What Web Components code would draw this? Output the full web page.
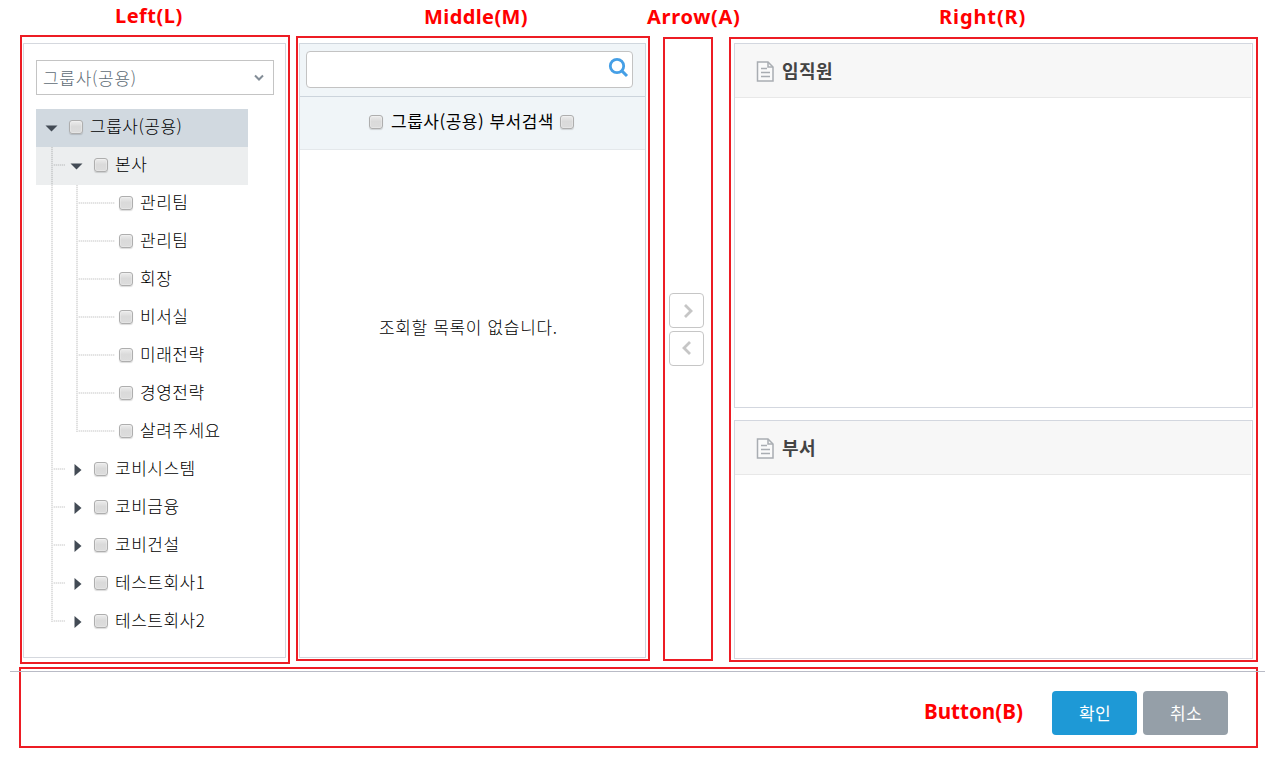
<!DOCTYPE html>
<html lang="ko">
<head>
<meta charset="utf-8">
<title>조직도</title>
<style>
html,body{margin:0;background:#fff;height:758px;overflow:hidden}
body{font-family:"Noto Sans CJK KR",sans-serif;font-size:16px;color:#222}
</style>
</head>
<body>
<org-dialog></org-dialog>
<script>
const define=(name,html,init)=>customElements.define(name,class extends HTMLElement{
  connectedCallback(){
    if(this.shadowRoot)return;
    const t=document.createElement('template');
    t.innerHTML='<style>*{box-sizing:border-box}</style>'+html;
    this.attachShadow({mode:'open'}).append(t.content.cloneNode(true));
    if(init)init.call(this,this.shadowRoot);
  }
});

define('check-box',`<style>
:host{display:block;flex:none;width:14px;height:14px;box-sizing:border-box;border:1px solid #aeaeae;border-radius:3px;background:linear-gradient(#ececec,#dadada 45%,#dcdcdc);box-shadow:0 1px 1px rgba(0,0,0,.14), inset 0 0 0 1px rgba(255,255,255,.25)}
</style>`);

define('area-label',`<style>
:host{display:block;white-space:nowrap;font:700 20px/24px "Noto Sans",sans-serif;color:#f00}
</style><slot></slot>`);

define('area-frame',`<style>
:host{display:flex;flex-direction:column;box-sizing:border-box;border:2px solid #ed1c24}
</style><slot></slot>`);

define('combo-box',`<style>
:host{display:flex;align-items:center;justify-content:space-between;box-sizing:border-box;height:35px;border:1px solid #c4c4c4;padding:0 9px 0 6px;color:#606c76;font-size:17px;font-weight:300;letter-spacing:.7px;line-height:33px;white-space:nowrap}
svg{display:block}
</style><span><slot></slot></span><svg width="10" height="8" viewBox="0 0 10 8"><path d="M1 1.5 5 5.5 9 1.5" fill="none" stroke="#838d97" stroke-width="2"/></svg>`);

define('tree-row',`<style>
:host{display:flex;align-items:stretch;height:38px;width:212px;white-space:nowrap;color:#000;font-size:17px;font-weight:300;letter-spacing:.5px}
:host([tone=sel]){background:#d1d9e0}
:host([tone=sub]){background:#eceeef}
.g{flex:none;width:25px;padding-left:15px}
.v{width:2px;height:38px;background:repeating-linear-gradient(rgba(0,0,0,.12) 0 1px,rgba(0,0,0,.04) 1px 2px)}
.v.half{height:19px}
.h{flex:none;align-self:flex-start;height:2px;margin-top:17px;background:repeating-linear-gradient(90deg,rgba(0,0,0,.04) 0 1px,rgba(0,0,0,.11) 1px 2px)}
.c{flex:none;width:33px;display:flex;align-items:center}
.c svg{display:block}
check-box{margin-top:11px}
.t{margin-left:7px;line-height:34px}
</style>`,function(r){
  const level=+this.getAttribute('level'),kind=this.getAttribute('kind'),guides=(this.getAttribute('guides')||'').split('');
  let h='';
  guides.forEach(g=>{
    h+=`<div class="g">${g==='|'||g==='+'?'<div class="v"></div>':g==='L'?'<div class="v half"></div>':''}</div>`;
  });
  const caret=kind==='open'?'<svg width="13" height="7" viewBox="0 0 13 7"><path d="M.5.5h12L6.5 6.5z" fill="#434b55"/></svg>'
    :kind==='shut'?'<svg width="8" height="12" viewBox="0 0 8 12"><path d="M.5 0v12L7.5 6z" fill="#434b55"/></svg>':'';
  const lineW=level===0?0:kind==='leaf'?37:12;
  const caretX=kind==='open'?9:13;
  const st=document.createElement('div');
  st.style.display='contents';
  st.innerHTML=h+(lineW?`<div class="h" style="width:${lineW}px;margin-left:-8px"></div>`:'')+
   `<div class="c" style="margin-left:${lineW?8-lineW:0}px;padding-left:${caretX}px;padding-bottom:${kind==='open'?0:1}px">${caret}</div><check-box></check-box><span class="t">${this.getAttribute('name')}</span>`;
  r.append(st);
});

define('tree-view',`<style>:host{display:flex;flex-direction:column}</style>`,function(r){
  [['그룹사(공용)',0,'open','','sel'],['본사',1,'open','+','sub'],
   ['관리팀',2,'leaf','|+'],['관리팀',2,'leaf','|+'],['회장',2,'leaf','|+'],['비서실',2,'leaf','|+'],['미래전략',2,'leaf','|+'],['경영전략',2,'leaf','|+'],['살려주세요',2,'leaf','|L'],
   ['코비시스템',1,'shut','+'],['코비금융',1,'shut','+'],['코비건설',1,'shut','+'],['테스트회사1',1,'shut','+'],['테스트회사2',1,'shut','L']
  ].forEach(([name,level,kind,guides,tone])=>{
    const e=document.createElement('tree-row');
    for(const [k,v] of Object.entries({name,level,kind,guides,tone:tone||''}))e.setAttribute(k,v);
    r.append(e);
  });
});

define('left-panel',`<style>
:host{display:block;box-sizing:border-box;margin:6px 2px 4px 1px;flex:1;border:1px solid #d5d8de;padding:16px 11px 0 12px}
tree-view{margin-top:14px}
</style><combo-box>그룹사(공용)</combo-box><tree-view></tree-view>`);

define('middle-panel',`<style>
:host{display:flex;flex-direction:column;box-sizing:border-box;margin:5px 2px 1px 1px;flex:1;border:1px solid #d0d7de}
.s{height:53px;background:#f0f5f8;border-bottom:1px solid #ccd4dc;padding:7px 12px 0 6px}
.i{height:37px;border:1px solid #c3c3c3;border-radius:4px;background:#fff;display:flex;justify-content:flex-end;padding:5px 3px 0 0}
.h{height:53px;background:#f0f5f8;border-bottom:1px solid #e4e8eb;display:flex;padding-left:69px;color:#000;font-weight:400;letter-spacing:.5px;font-size:17px;white-space:nowrap}
.h check-box{margin-top:18px}
.h span{line-height:48px;width:169px;margin-left:8px}
.e{margin:164px 0 0 79px;line-height:25px;color:#000;white-space:nowrap;font-size:17px;font-weight:300;letter-spacing:.65px}
</style>
<div class="s"><div class="i"><svg width="21" height="21" viewBox="0 0 21 21"><circle cx="9" cy="9" r="6.7" fill="none" stroke="#459fe6" stroke-width="2.8"/><path d="M13.6 13.6 19 19" stroke="#459fe6" stroke-width="3"/></svg></div></div>
<div class="h"><check-box></check-box><span>그룹사(공용) 부서검색</span><check-box></check-box></div>
<div class="e">조회할 목록이 없습니다.</div>`);

define('move-button',`<style>
:host{display:flex;box-sizing:border-box;width:35px;height:35px;border:1px solid #c6c6c6;border-radius:4px;padding:10px 0 0 14px}
:host([dir=left]){padding:9px 0 0 12px}
svg{display:block}
:host([dir=left]) svg{transform:scaleX(-1)}
</style><svg width="9" height="14" viewBox="0 0 9 14"><path d="M1 1 7 7 1 13" fill="none" stroke="#c6c6c6" stroke-width="2.8"/></svg>`);

define('list-card',`<style>
:host{display:block;box-sizing:border-box;border:1px solid #d3d7df;padding-right:1px}
.h{height:54px;background:#f7f7f7;border-bottom:1px solid #e8e8e8;display:flex;padding:17px 0 0 21px}
svg{display:block;flex:none}
span{margin:-4px 0 0 8px;font-size:18px;font-weight:700;line-height:26px;color:#444;letter-spacing:.5px}
</style><div class="h"><svg width="18" height="21" viewBox="0 0 18 21"><path d="M1.5 1H12L17 6V20H1.5z" fill="#fafafa" stroke="#a9adb2" stroke-width="1.5"/><path d="M12 1V6H17" fill="none" stroke="#a9adb2" stroke-width="1.5"/><path d="M5 7.5h6M5 11.5h9M5 15.5h9" stroke="#a9adb2" stroke-width="1.5"/></svg><span><slot></slot></span></div>`);

define('push-button',`<style>
:host{display:block;flex:none;width:85px;height:44px;border-radius:4px;background:#1e99d6;color:#fff;font-size:17px;font-weight:400;line-height:43px;text-align:center;letter-spacing:.4px;padding-left:1px;box-sizing:border-box}
:host([tone=gray]){background:#959fa8}
</style><slot></slot>`);

define('org-dialog',`<style>
:host{display:flex;flex-direction:column;width:1276px;height:758px;position:relative}
.top{display:flex;height:664px;padding-left:20px}
.col{display:flex;flex-direction:column;align-items:stretch}
.foot{position:relative;height:81px;margin:3px 18px 0 19px;display:flex}
.foot area-frame{flex:1;flex-direction:row;padding:22px 28px 0 903px}
.rule{position:absolute;height:1px;left:-9px;right:-7px;top:4px;background:#b9bbc6}
</style>
<div class="top">
 <div class="col" style="width:270px"><area-label style="margin:4px 0 7px 95px;letter-spacing:.5px">Left(L)</area-label><area-frame style="height:629px"><left-panel></left-panel></area-frame></div>
 <div class="col" style="width:354px;margin-left:6px"><area-label style="margin:5px 0 7px 128px;letter-spacing:.4px">Middle(M)</area-label><area-frame style="height:625px"><middle-panel></middle-panel></area-frame></div>
 <div class="col" style="width:50px;margin-left:13px"><area-label style="margin:5px 0 8px -16px;letter-spacing:.7px">Arrow(A)</area-label><area-frame style="height:624px;padding:254px 0 0 4px;gap:3px"><move-button></move-button><move-button dir="left"></move-button></area-frame></div>
 <div class="col" style="width:529px;margin-left:16px"><area-label style="margin:5px 0 8px 210px;letter-spacing:.9px">Right(R)</area-label><area-frame style="height:625px;padding:4px 3px 0;gap:12px"><list-card style="height:365px">임직원</list-card><list-card style="height:239px">부서</list-card></area-frame></div>
</div>
<div class="foot"><div class="rule"></div><area-frame><area-label style="width:128px;margin-top:8px;font-size:20.6px">Button(B)</area-label><push-button>확인</push-button><push-button tone="gray" style="margin-left:6px">취소</push-button></area-frame></div>`);
</script>
</body>
</html>
